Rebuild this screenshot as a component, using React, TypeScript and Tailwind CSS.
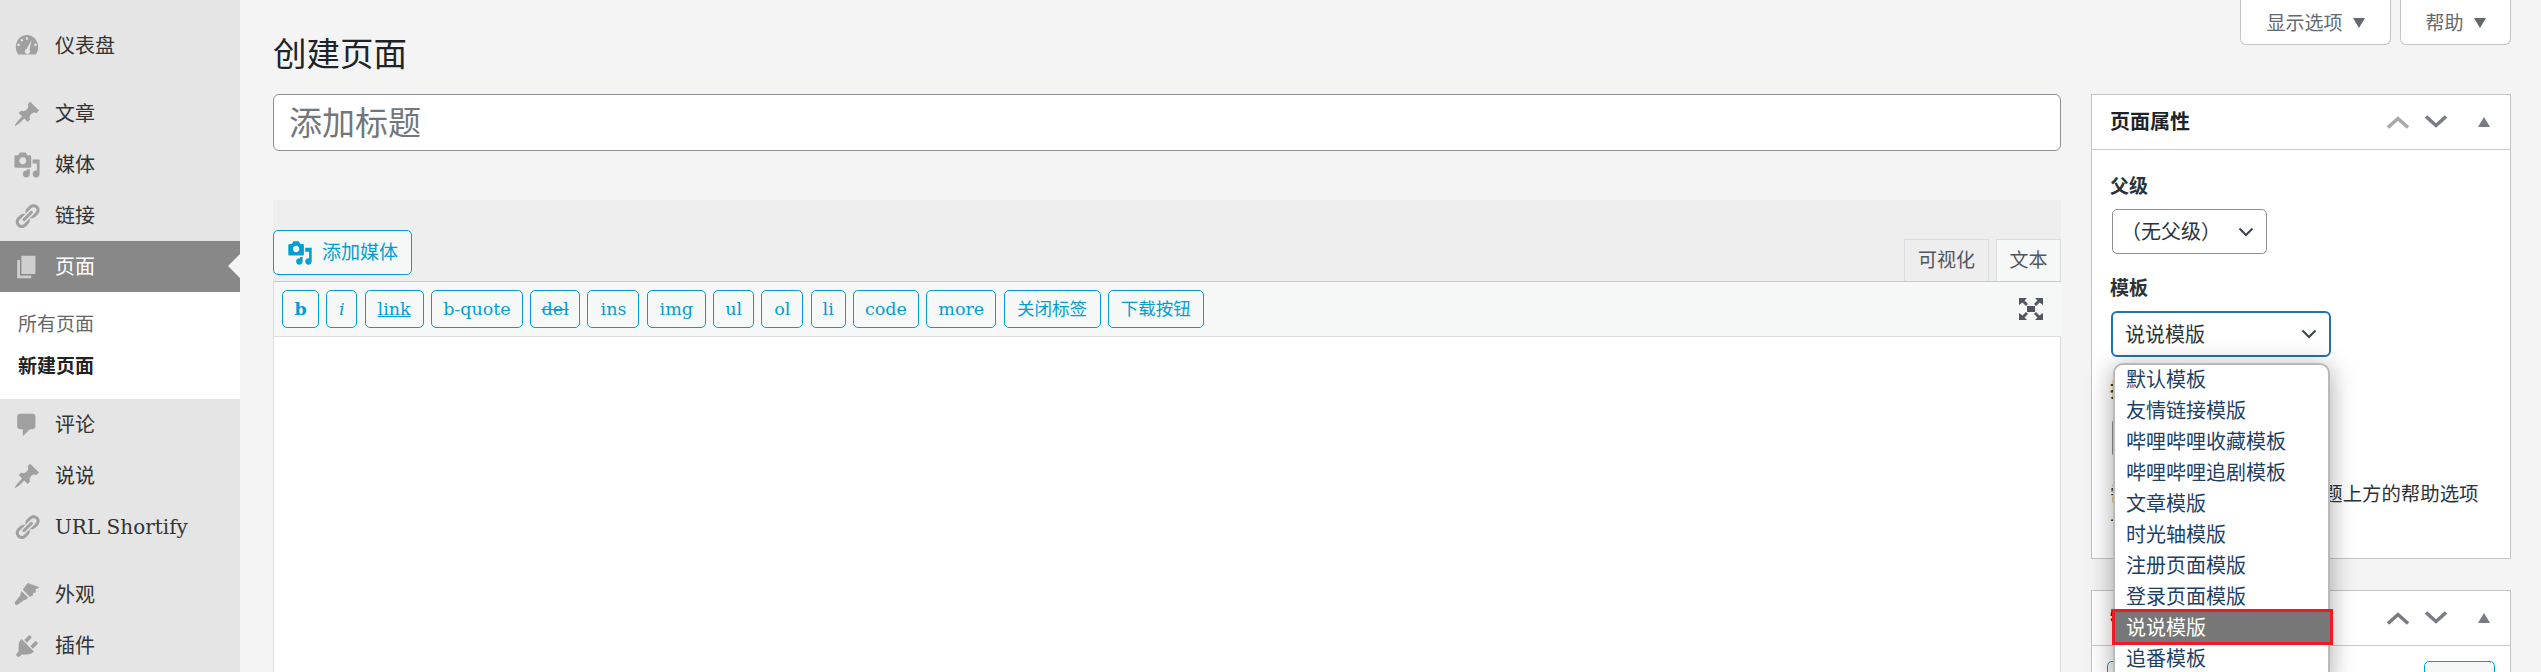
const font = 'font-["DejaVu_Serif","Noto_Sans_CJK_SC",serif]'

const iconBox = 'w-[28px] h-[28px] fill-[#a0a0a0]'

function Pin() {
  return (
    <svg viewBox="0 0 20 20" className={iconBox}>
      <path d="M10.44 3.02l1.82-1.82 6.36 6.35-1.83 1.82c-1.05-.68-2.48-.57-3.41.36l-.75.75c-.92.93-1.04 2.35-.35 3.41l-1.83 1.82-2.41-2.41-2.8 2.79c-.42.42-3.38 2.71-3.8 2.29s1.86-3.39 2.28-3.81l2.79-2.79L4.1 9.36l1.83-1.82c1.05.69 2.48.57 3.4-.36l.75-.75c.93-.92 1.05-2.35.36-3.41z" />
    </svg>
  )
}

function Gauge() {
  return (
    <svg viewBox="0 0 20 20" className={iconBox}>
      <path
        fillRule="evenodd"
        d="M3.76 16h12.48c1.1-1.43 1.76-3.21 1.76-5.14 0-4.77-3.58-8.64-8-8.64s-8 3.87-8 8.64c0 1.93.66 3.71 1.76 5.14zM10 3.7a.9.9 0 1 1 0 1.8.9.9 0 0 1 0-1.800zM6.300 5a.9.9 0 1 1 0 1.800.9.9 0 0 1 0-1.800zM4 8.300a.9.9 0 1 1 0 1.800.9.9 0 0 1 0-1.800zM16 8.300a.9.9 0 1 1 0 1.800.9.9 0 0 1 0-1.800zM13.300 5.800l-1.500 6.900a1.900 1.900 0 1 1-3.400 1.200c0-1 .6-1.700 1.400-2z"
      />
    </svg>
  )
}

function Media({ className }: { className: string }) {
  return (
    <svg viewBox="0 0 20 20" className={className}>
      <path
        fillRule="evenodd"
        d="M13 11V4c0-.55-.45-1-1-1h-1.670L9 1H5L3.670 3H2c-.55 0-1 .45-1 1v7c0 .55.45 1 1 1h10c.55 0 1-.45 1-1zM7 4.500c1.380 0 2.500 1.120 2.500 2.500S8.380 9.500 7 9.500 4.500 8.380 4.500 7 5.620 4.500 7 4.500zM14 6h5v10.500c0 1.380-1.120 2.500-2.500 2.500S14 17.880 14 16.500s1.120-2.500 2.500-2.500c.17 0 .34.020.5.050V9h-3V6zm-4 8.050V13h2v3.500c0 1.380-1.120 2.500-2.500 2.500S7 17.880 7 16.500 8.120 14 9.500 14c.17 0 .34.020.5.050z"
      />
    </svg>
  )
}

function Links() {
  return (
    <svg viewBox="0 0 20 20" className={iconBox}>
      <path d="M17.74 2.76c1.68 1.69 1.68 4.41 0 6.100l-1.530 1.520c-1.120 1.120-2.700 1.490-4.140 1.110l2.620-2.610.76-.77.76-.76c.84-.84.84-2.200 0-3.040-.84-.85-2.200-.85-3.040 0l-.77.76-3.380 3.380c-.37-1.440-.01-3.020 1.110-4.140l1.520-1.530c1.690-1.680 4.420-1.680 6.090 0zM8.590 13.430l5.340-5.340c.42-.42.42-1.100 0-1.520-.44-.43-1.130-.39-1.530 0l-5.330 5.340c-.42.42-.42 1.100 0 1.520.44.43 1.130.39 1.520 0zm-.76 2.290l4.140-4.150c.38 1.440.01 3.020-1.110 4.140l-1.520 1.530c-1.690 1.680-4.410 1.680-6.100 0-1.680-1.680-1.680-4.420 0-6.100l1.530-1.520c1.120-1.120 2.700-1.480 4.140-1.110l-4.140 4.150c-.85.84-.85 2.200 0 3.050.84.84 2.200.84 3.040 0z" />
    </svg>
  )
}

function Pages() {
  return (
    <svg viewBox="0 0 20 20" className="w-[28px] h-[28px] fill-[#cfcfcf]">
      <path d="M6 15V2h10v13H6zm-1 1h8v2H3V5h2v11z" />
    </svg>
  )
}

function Comment() {
  return (
    <svg viewBox="0 0 20 20" className={iconBox}>
      <path d="M5 2h9c1.100 0 2 .9 2 2v7c0 1.100-.9 2-2 2h-2l-5 5v-5H5c-1.100 0-2-.9-2-2V4c0-1.100.9-2 2-2z" />
    </svg>
  )
}

function Brush() {
  return (
    <svg viewBox="0 0 20 20" className={iconBox}>
      <path d="M10.500 1.500l8.500 3-3 1.500.5 2-2 .5-.5 2-2.200.8L7 6z" />
      <path d="M6 7.200l5 4.800-2.300 1.500-1 .3-4.200 3c-1 .6-2 .1-2.200-.8-.1-.6.100-1.100.6-1.600l3.200-4 .3-1z" />
    </svg>
  )
}

function Plug() {
  return (
    <svg viewBox="0 0 20 20" className={iconBox}>
      <path d="M13.110 4.360L9.870 7.600 8 5.730l3.240-3.240c.35-.34 1.050-.2 1.560.32.520.51.660 1.210.310 1.550zm-8 1.770l.910-1.120 9.010 9.010-1.190.84c-.710.710-2.630 1.160-3.820 1.160H6.140L4.900 17.260c-.59.59-1.540.59-2.120 0-.59-.58-.59-1.530 0-2.120l1.240-1.240v-3.880c0-1.130.4-3.050 1.090-3.890zm7.260 3.970l3.240-3.240c.34-.35 1.040-.21 1.550.31.520.51.660 1.210.310 1.550l-3.240 3.250z" />
    </svg>
  )
}

function Chevron({ up, color }: { up?: boolean; color: string }) {
  return (
    <svg viewBox="0 0 22 14" className="w-[22px] h-[14px]">
      <path d={up ? 'M1 12.500l10-9 10 9' : 'M1 1.500l10 9 10-9'} fill="none" stroke={color} strokeWidth="3.500" />
    </svg>
  )
}

function Caret({ size, color, up }: { size: string; color: string; up?: boolean }) {
  return (
    <svg viewBox="0 0 12 10" className={size}>
      <path d={up ? 'M6 0l6 10H0z' : 'M0 0h12L6 10z'} fill={color} />
    </svg>
  )
}

function SelectArrow() {
  return (
    <svg viewBox="0 0 16 10" className="w-[16px] h-[10px]">
      <path d="M1.500 1.500L8 8l6.500-6.500" fill="none" stroke="#3c434a" strokeWidth="2" />
    </svg>
  )
}

function MenuItem({ icon, label, active }: { icon: React.ReactNode; label: string; active?: boolean }) {
  return (
    <div className={`flex items-center h-[51px] pl-[13px] text-[20px] relative ${active ? 'bg-[#888888] text-white' : 'text-[#333333]'}`}>
      <span className="w-[42px] flex shrink-0">{icon}</span>
      <span className="pt-[1px]">{label}</span>
      {active && (
        <span className="absolute right-0 top-[13px] border-y-[12px] border-r-[12px] border-y-transparent border-r-[#f4f4f4]" />
      )}
    </div>
  )
}

function Sidebar() {
  return (
    <div className="w-[240px] shrink-0 bg-[#e5e5e5] pt-[20px]">
      <MenuItem icon={<Gauge />} label="仪表盘" />
      <div className="h-[17px]" />
      <MenuItem icon={<Pin />} label="文章" />
      <MenuItem icon={<Media className={iconBox} />} label="媒体" />
      <MenuItem icon={<Links />} label="链接" />
      <MenuItem icon={<Pages />} label="页面" active />
      <div className="bg-white h-[107px] pl-[18px] pt-[11px] text-[19px] leading-[42px]">
        <div className="text-[#666666]">所有页面</div>
        <div className="text-[#222222] font-bold">新建页面</div>
      </div>
      <MenuItem icon={<Comment />} label="评论" />
      <MenuItem icon={<Pin />} label="说说" />
      <MenuItem icon={<Links />} label="URL Shortify" />
      <div className="h-[17px]" />
      <MenuItem icon={<Brush />} label="外观" />
      <MenuItem icon={<Plug />} label="插件" />
    </div>
  )
}

const tools = [
  { t: 'b', w: 'w-[37px]', c: 'font-bold' },
  { t: 'i', w: 'w-[31px]', c: 'italic' },
  { t: 'link', w: 'w-[59px]', c: 'underline' },
  { t: 'b-quote', w: 'w-[92px]', c: '' },
  { t: 'del', w: 'w-[50px]', c: 'line-through' },
  { t: 'ins', w: 'w-[52px]', c: '' },
  { t: 'img', w: 'w-[59px]', c: '' },
  { t: 'ul', w: 'w-[41px]', c: '' },
  { t: 'ol', w: 'w-[42px]', c: '' },
  { t: 'li', w: 'w-[35px]', c: '' },
  { t: 'code', w: 'w-[66px]', c: '' },
  { t: 'more', w: 'w-[70px]', c: '' },
  { t: '关闭标签', w: 'w-[97px]', c: '' },
  { t: '下载按钮', w: 'w-[96px]', c: '' },
]

function Editor() {
  return (
    <div className="mt-[49px] flex-1 flex flex-col">
      <div className="bg-[#eeeeee] h-[81px] flex items-end justify-between relative">
        <div className="mb-[6px] w-[139px] h-[45px] border border-[#00a0d2] rounded-[5px] bg-[#f6f7f7] flex items-center pl-[13px] gap-[9px] text-[#00a0d2] text-[19px]">
          <Media className="w-[26px] h-[26px] fill-[#00a0d2]" />
          <span>添加媒体</span>
        </div>
        <div className="flex gap-[7px] items-end">
          <div className="w-[85px] h-[42px] border border-[#dcdcde] border-b-0 text-[#50575e] text-[19px] flex items-center justify-center">可视化</div>
          <div className="w-[65px] h-[42px] border border-[#dcdcde] border-b-0 bg-[#f6f7f7] text-[#50575e] text-[19px] flex items-center justify-center">文本</div>
        </div>
      </div>
      <div className="h-[56px] bg-[#f6f7f7] border-t border-[#c9c9c9] border-b border-b-[#dcdcde] border-l border-l-[#dcdcde] flex items-center pl-[8px] gap-[7.300px]">
        {tools.map(b => (
          <div
            key={b.t}
            className={`${b.w} h-[38px] shrink-0 border border-[#00a0d2] rounded-[5px] text-[#00a0d2] text-[17.500px] flex items-center justify-center ${b.c}`}
          >
            {b.t}
          </div>
        ))}
        <svg viewBox="0 0 26 24" className="w-[26px] h-[24px] ml-auto mr-[17px] fill-[#50575e]">
          <path d="M9 9h8v6H9z" />
          <path d="M1 1h8L6.500 3.500 10 7 8 9 4.500 5.500 1 8zM25 1v7l-3.500-2.500L18 9l-2-2 3.500-3.500L17 1zM1 23v-7l3.500 2.500L8 15l2 2-3.500 3.500L9 23zM25 23h-8l2.500-2.500L16 17l2-2 3.500 3.500L25 16z" />
        </svg>
      </div>
      <div className="flex-1 bg-white border-l border-r border-[#dcdcde]" />
    </div>
  )
}

function PanelHead({ title, dim }: { title: string; dim?: boolean }) {
  return (
    <div className="h-[55px] border-b border-[#c9c9c9] flex items-center pl-[18px] pr-[20px] shrink-0">
      <span className="font-bold text-[20px] text-[#1d2327]">{title}</span>
      <span className="ml-auto flex items-center gap-[16px]">
        <Chevron up color={dim ? '#a7aaad' : '#787c82'} />
        <Chevron color="#787c82" />
        <span className="ml-[15px]">
          <Caret size="w-[12px] h-[10px]" color="#787c82" up />
        </span>
      </span>
    </div>
  )
}

const templates = ['默认模板', '友情链接模版', '哔哩哔哩收藏模板', '哔哩哔哩追剧模板', '文章模版', '时光轴模版', '注册页面模版', '登录页面模版']

function Attributes() {
  return (
    <div className="h-[465px] border border-[#c3c4c7] bg-white">
      <PanelHead title="页面属性" dim />
      <div className="pl-[18px] pt-[22px] text-[#2c3338]">
        <div className="text-[19px] font-semibold leading-[28px]">父级</div>
        <div className="mt-[9px] ml-[2px] w-[155px] h-[45px] border border-[#8c8f94] rounded-[5px] flex items-center pl-[8px] pr-[12px] text-[20px] justify-between">
          <span>（无父级）</span>
          <SelectArrow />
        </div>
        <div className="mt-[20px] text-[19px] font-semibold leading-[28px]">模板</div>
        <div className="relative mt-[9px] ml-[1px] w-[220px] h-[46px] border-2 border-[#2271b1] rounded-[6px] flex items-center pl-[12px] pr-[12px] text-[20px] justify-between">
          <span className="pt-[2px]">说说模版</span>
          <SelectArrow />
          <div className="absolute z-10 left-0 top-[50px] w-[217px] h-[320px] bg-white border-2 border-[#b9b9b9] rounded-[10px] shadow-[0_4px_26px_rgba(0,0,0,0.35)]">
            <div className="text-[20px] leading-[31px] text-[#1d3f66]">
              {templates.map(t => (
                <div key={t} className="pl-[11px] h-[31px]">{t}</div>
              ))}
              <div className="relative -ml-[3px] w-[221px] h-[36px] mt-[-4px] border-[3px] border-[#ed1c24] bg-[#777777] text-white pl-[11px] pt-[2px] leading-[28px]">说说模版</div>
              <div className="pl-[11px] h-[31px] mt-[-1px]">追番模板</div>
            </div>
          </div>
        </div>
        <div className="mt-[19px] text-[19px] font-semibold leading-[28px]">排序</div>
        <div className="mt-[14px] ml-[2px] w-[100px] h-[40px] border border-[#8c8f94] rounded-[5px]" />
        <div className="mt-[23px] text-[19.400px] leading-[28px] whitespace-nowrap">需要帮助？请使用页面标题上方的帮助选项</div>
        <div className="text-[19.200px] leading-[28px]">卡</div>
      </div>
    </div>
  )
}

export default function App() {
  return (
    <div className={`flex h-[672px] w-full overflow-hidden bg-[#f4f4f4] ${font}`}>
      <Sidebar />
      <div className="flex-1 min-w-0 pl-[33px] pr-[30px] flex flex-col">
        <div className="h-[94px] flex justify-between shrink-0 items-start">
          <div className="pt-[33px] text-[33.500px] leading-[44px] text-[#1d2327]">创建页面</div>
          <div className="flex gap-[9px] text-[#646970] text-[19px]">
            <div className="w-[151px] h-[45px] pt-[2px] bg-white border border-t-0 border-[#c3c4c7] rounded-b-[6px] flex items-center justify-center gap-[10px]">
              显示选项 <Caret size="w-[12px] h-[10px]" color="#646970" />
            </div>
            <div className="w-[111px] h-[45px] pt-[2px] bg-white border border-t-0 border-[#c3c4c7] rounded-b-[6px] flex items-center justify-center gap-[10px]">
              帮助 <Caret size="w-[12px] h-[10px]" color="#646970" />
            </div>
          </div>
        </div>
        <div className="flex-1 flex gap-[30px] min-h-0">
          <div className="w-[1788px] shrink-0 flex flex-col">
            <div className="h-[57px] shrink-0 pt-[3px] bg-white border border-[#8c8f94] rounded-[6px] flex items-center pl-[15px] text-[33px] text-[#72777c]">添加标题</div>
            <Editor />
          </div>
          <div className="w-[420px] shrink-0">
            <Attributes />
            <div className="mt-[31px] h-[200px] border border-[#c3c4c7] bg-white">
              <PanelHead title="特色图片" />
              <div className="flex justify-between pl-[15px] pr-[15px] pt-[15px]">
                <div className="w-[100px] h-[40px] border border-[#00a0d2] rounded-[5px] bg-[#f6f7f7]" />
                <div className="w-[71px] h-[40px] border border-[#00a0d2] rounded-[5px] bg-[#f6f7f7]" />
              </div>
            </div>
          </div>
        </div>
      </div>
    </div>
  )
}
